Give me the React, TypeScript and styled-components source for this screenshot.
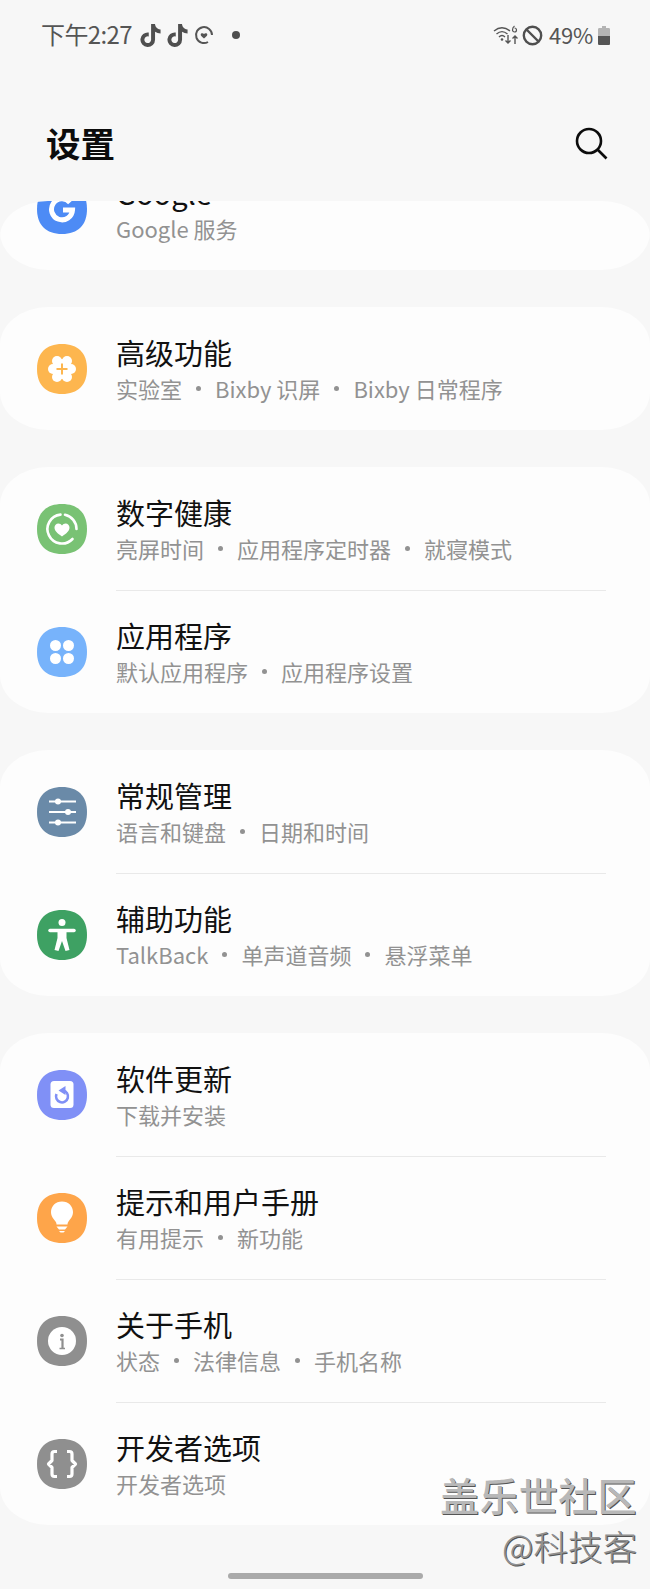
import React from "react";
import styled, { createGlobalStyle } from "styled-components";
import { FaTiktok } from "react-icons/fa6";

const GlobalStyle = createGlobalStyle`
  html, body {
    margin: 0;
    padding: 0;
    background: #f7f7f7;
  }
  * {
    box-sizing: border-box;
  }
`;

const FONT = `"Noto Sans CJK SC", "Noto Sans", sans-serif`;

const Page = styled.div`
  position: relative;
  width: 650px;
  height: 1589px;
  overflow: hidden;
  display: flex;
  flex-direction: column;
  background: #f7f7f7;
  font-family: ${FONT};
`;

const StatusBar = styled.div`
  height: 70px;
  padding: 0 40px 0 41px;
  display: flex;
  align-items: center;
  justify-content: space-between;
  color: #555;
  font-size: 24px;
  font-weight: 400;
`;

const StatusGroup = styled.div`
  display: flex;
  align-items: center;
`;

const Clock = styled.span`
  letter-spacing: -0.6px;
  margin: 0 8px 3px 0;
`;

const TikTok = styled(FaTiktok)`
  width: 21px;
  height: 23px;
  margin-right: 6px;
  color: #4f4f4f;
`;

const Percent = styled.span`
  font-size: 22px;
  margin: 0 5px 3px 6px;
  letter-spacing: -0.2px;
`;

const Header = styled.div`
  height: 131px;
  padding: 17px 41px 0 46px;
  display: flex;
  align-items: center;
  justify-content: space-between;
`;

const Title = styled.h1`
  margin: 0 0 5px;
  font-size: 34.5px;
  font-weight: 700;
  color: #0c0c0c;
`;

const List = styled.div`
  flex: 1;
  min-height: 0;
  overflow: hidden;
  border-radius: 48px 48px 0 0 / 36px 36px 0 0;
  display: flex;
  flex-direction: column;
  gap: 37px;
`;

const Card = styled.section<{ $clipped?: boolean }>`
  flex: none;
  background: #fdfdfd;
  border-radius: 48px / 38px;
  margin-top: ${({ $clipped }) => ($clipped ? "-54px" : "0")};
`;

const Row = styled.div`
  height: 123px;
  padding: 0 44px 0 37px;
  display: flex;
  align-items: center;
  gap: 29px;
`;

const Body = styled.div<{ $divided: boolean }>`
  flex: 1;
  height: 100%;
  padding-top: 23px;
  border-top: ${({ $divided }) => ($divided ? "1.5px solid #e9e9e9" : "1.5px solid transparent")};
`;

const RowTitle = styled.div`
  font-size: 29px;
  line-height: 43px;
  color: #111;
`;

const RowSub = styled.div`
  display: flex;
  align-items: center;
  font-size: 22px;
  line-height: 29px;
  color: #929292;
`;

const Dot = styled.i`
  width: 5px;
  height: 5px;
  margin: 0 14px;
  border-radius: 50%;
  background: #929292;
`;

const Glyph = styled.svg`
  flex: none;
  display: block;
`;

const Watermark = styled.div`
  position: absolute;
  right: 13px;
  bottom: 24px;
  display: flex;
  flex-direction: column;
  align-items: flex-end;
  font-family: ${FONT};
`;

const MarkMain = styled.div`
  font-size: 39px;
  line-height: 48px;
  font-weight: 500;
  letter-spacing: 0.4px;
  color: #b8b8b8;
  text-shadow: 1px 1px 0 #555, -1px 0 0 #fff;
`;

const MarkSub = styled.div`
  margin-top: 7px;
  font-size: 34.5px;
  line-height: 40px;
  font-weight: 300;
  color: #909090;
  text-shadow: 1px 1px 0 #555;
`;

const HomeBar = styled.div`
  position: absolute;
  left: 228px;
  bottom: 10px;
  width: 195px;
  height: 6px;
  border-radius: 3px;
  background: #aaa;
`;

const SQUIRCLE = "M25 0C41 0 50 9 50 25C50 41 41 50 25 50C9 50 0 41 0 25C0 9 9 0 25 0Z";

const Tile = ({ color, children }: { color: string; children: React.ReactNode }) => (
  <Glyph width="50" height="50" viewBox="0 0 50 50">
    <path d={SQUIRCLE} fill={color} />
    {children}
  </Glyph>
);

const icons: Record<string, React.ReactNode> = {
  google: (
    <Tile color="#4d8bf5">
      <path d="M33 18.5A10.500 10.500 0 1 0 35.500 26H26" fill="none" stroke="#fff" strokeWidth="5" />
    </Tile>
  ),
  advanced: (
    <Tile color="#fdb64f">
      <g fill="#fff">
        <circle cx="25" cy="25" r="10" />
        <circle cx="34" cy="25" r="5" />
        <circle cx="16" cy="25" r="5" />
        <circle cx="30" cy="17" r="5" />
        <circle cx="20" cy="17" r="5" />
        <circle cx="30" cy="33" r="5" />
        <circle cx="20" cy="33" r="5" />
      </g>
      <path d="M25 19.500v11M19.500 25h11" stroke="#fdb64f" strokeWidth="2" />
    </Tile>
  ),
  wellbeing: (
    <Tile color="#79c274">
      <g fill="none" stroke="#fff" strokeLinecap="round" strokeWidth="2.600">
        <path d="M39.500 25A14.500 14.500 0 0 0 28 10.800" />
        <path d="M23.500 10.600A14.500 14.500 0 1 0 35.500 35" />
      </g>
      <path
        d="M25 32.500c-4.600-3.200-7.500-5.600-7.500-9 0-2.300 1.700-4 3.900-4 1.500 0 2.800.8 3.600 2.100.8-1.300 2.100-2.100 3.600-2.100 2.200 0 3.900 1.700 3.900 4 0 3.400-2.900 5.800-7.500 9z"
        fill="#fff"
      />
    </Tile>
  ),
  apps: (
    <Tile color="#77b3fb">
      <circle cx="18.500" cy="18.500" r="5.500" fill="#fff" />
      <circle cx="31.500" cy="18.500" r="5.500" fill="#fff" />
      <circle cx="18.500" cy="31.500" r="5.500" fill="#fff" />
      <circle cx="31.500" cy="31.500" r="5.500" fill="#fff" />
    </Tile>
  ),
  general: (
    <Tile color="#6a8aa8">
      <path d="M12 14.500h27M12 25h27M12 35.500h27" stroke="#fff" strokeWidth="1.800" />
      <circle cx="21" cy="14.500" r="3" fill="#fff" />
      <circle cx="31" cy="25" r="3" fill="#fff" />
      <circle cx="21" cy="35.500" r="3" fill="#fff" />
    </Tile>
  ),
  access: (
    <Tile color="#3ea163">
      <circle cx="25" cy="12.500" r="3.500" fill="#fff" />
      <path d="M13 20.500h24" stroke="#fff" strokeWidth="3.500" strokeLinecap="round" />
      <path d="M20.500 20H29.500V28L32.500 40L28.500 41L25 31L21.500 41L17.500 40L20.500 28Z" fill="#fff" />
    </Tile>
  ),
  update: (
    <Tile color="#8090f6">
      <rect x="13.500" y="11" width="23" height="27" rx="3.500" fill="#fff" />
      <path d="M19.500 24A6 6 0 1 0 26 20.500" fill="none" stroke="#8090f6" strokeWidth="2.600" />
      <path d="M21.500 20.500L28.500 16V25Z" fill="#8090f6" />
    </Tile>
  ),
  tips: (
    <Tile color="#fea54a">
      <path
        d="M25 8.500c6.500 0 11 4.800 11 10.500 0 4.500-2.600 7-4.500 9.500-.8 1-1 2-1 3h-11c0-1-.2-2-1-3-1.900-2.500-4.500-5-4.500-9.500 0-5.700 4.500-10.500 11-10.500z"
        fill="#fff"
      />
      <path d="M19.500 33.500h11l-2.500 3h-6zM22 38h6l-1.500 1.500h-3z" fill="#fff" />
    </Tile>
  ),
  about: (
    <Tile color="#8f8f8f">
      <circle cx="25" cy="25" r="14" fill="#fff" />
      <circle cx="25" cy="19.500" r="1.800" fill="#8f8f8f" />
      <path d="M23 23.500h2.500V32" fill="none" stroke="#8f8f8f" strokeWidth="2.200" />
      <path d="M22.500 32.500h5.500" stroke="#8f8f8f" strokeWidth="1.500" />
    </Tile>
  ),
  dev: (
    <Tile color="#8f8f8f">
      <path
        d="M20 12.500h-2.500c-1.800 0-2.500 1-2.500 2.500v6.500l-3.500 3.500 3.500 3.500V35c0 1.500.7 2.500 2.500 2.500H20M30 12.500h2.500c1.800 0 2.500 1 2.500 2.500v6.500l3.500 3.500-3.500 3.500V35c0 1.500-.7 2.500-2.500 2.500H30"
        fill="none"
        stroke="#fff"
        strokeWidth="3.200"
        strokeLinejoin="round"
      />
    </Tile>
  ),
};

type Item = { icon: string; title: string; subs: string[] };

const groups: { clipped?: boolean; items: Item[] }[] = [
  { clipped: true, items: [{ icon: "google", title: "Google", subs: ["Google 服务"] }] },
  { items: [{ icon: "advanced", title: "高级功能", subs: ["实验室", "Bixby 识屏", "Bixby 日常程序"] }] },
  {
    items: [
      { icon: "wellbeing", title: "数字健康", subs: ["亮屏时间", "应用程序定时器", "就寝模式"] },
      { icon: "apps", title: "应用程序", subs: ["默认应用程序", "应用程序设置"] },
    ],
  },
  {
    items: [
      { icon: "general", title: "常规管理", subs: ["语言和键盘", "日期和时间"] },
      { icon: "access", title: "辅助功能", subs: ["TalkBack", "单声道音频", "悬浮菜单"] },
    ],
  },
  {
    items: [
      { icon: "update", title: "软件更新", subs: ["下载并安装"] },
      { icon: "tips", title: "提示和用户手册", subs: ["有用提示", "新功能"] },
      { icon: "about", title: "关于手机", subs: ["状态", "法律信息", "手机名称"] },
      { icon: "dev", title: "开发者选项", subs: ["开发者选项"] },
    ],
  },
];

const HealthStatus = () => (
  <Glyph width="20" height="20" viewBox="0 0 20 20">
    <path d="M18 10a8 8 0 1 0-4 7" fill="none" stroke="#555" strokeWidth="2" />
    <path d="M10 13.500c-2.200-1.600-3.300-2.600-3.300-3.900C6.700 8.200 9 7.800 10 9.100c1-1.300 3.300-.9 3.300.5 0 1.300-1.100 2.300-3.300 3.900z" fill="#555" />
  </Glyph>
);

const NotifyDot = () => (
  <Glyph width="8" height="8" viewBox="0 0 8 8" style={{ marginLeft: 18 }}>
    <circle cx="4" cy="4" r="4" fill="#4f4f4f" />
  </Glyph>
);

const WifiStatus = () => (
  <Glyph width="26" height="20" viewBox="0 0 26 20">
    <g fill="none" stroke="#555" strokeWidth="1.400">
      <path d="M1 6c5-4 11-4 16 0" />
      <path d="M3.500 9c3.500-3 7.500-3 11 0" />
      <path d="M6 12c2-2 4-2 6 0" />
    </g>
    <circle cx="9" cy="14.500" r="1.300" fill="#555" />
    <path d="M15 10v8m-2.500-2.500L15 18l2.500-2.500M22 19v-8m-2.500 2.500L22 11l2.500 2.500" fill="none" stroke="#555" strokeWidth="1.400" />
    <path d="M21.500 1c-1.500 1-2 2.500-2 4a2 2 0 1 0 2-2" fill="none" stroke="#555" strokeWidth="1.200" />
  </Glyph>
);

const BlockStatus = () => (
  <Glyph width="21" height="21" viewBox="0 0 21 21" style={{ marginLeft: 3 }}>
    <circle cx="10.500" cy="10.500" r="8.700" fill="none" stroke="#4f4f4f" strokeWidth="2.400" />
    <path d="M4.500 4.500l12 12" stroke="#4f4f4f" strokeWidth="2.400" />
  </Glyph>
);

const BatteryStatus = () => (
  <Glyph width="12" height="19" viewBox="0 0 12 19">
    <path d="M4 0h4v2h2.500c1 0 1.500.5 1.500 1.500V10H0V3.500C0 2.500.5 2 1.500 2H4z" fill="#b4b4b4" />
    <path d="M0 10h12v7.500c0 1-.5 1.500-1.500 1.500h-9C.5 19 0 18.500 0 17.500z" fill="#555" />
  </Glyph>
);

const SearchIcon = () => (
  <Glyph width="34" height="34" viewBox="0 0 34 34">
    <circle cx="14" cy="14" r="12" fill="none" stroke="#0c0c0c" strokeWidth="2.600" />
    <path d="M22.500 22.500l9 9" stroke="#0c0c0c" strokeWidth="2.600" />
  </Glyph>
);

const App = () => {
  return (
    <Page>
      <GlobalStyle />
      <StatusBar>
        <StatusGroup>
          <Clock>下午2:27</Clock>
          <TikTok />
          <TikTok />
          <HealthStatus />
          <NotifyDot />
        </StatusGroup>
        <StatusGroup>
          <WifiStatus />
          <BlockStatus />
          <Percent>49%</Percent>
          <BatteryStatus />
        </StatusGroup>
      </StatusBar>
      <Header>
        <Title>设置</Title>
        <SearchIcon />
      </Header>
      <List>
        {groups.map((group, g) => (
          <Card key={g} $clipped={group.clipped}>
            {group.items.map((item, i) => (
              <Row key={item.title}>
                {icons[item.icon]}
                <Body $divided={i > 0}>
                  <RowTitle>{item.title}</RowTitle>
                  <RowSub>
                    {item.subs.map((sub, s) => (
                      <React.Fragment key={sub}>
                        {s > 0 && <Dot />}
                        <span>{sub}</span>
                      </React.Fragment>
                    ))}
                  </RowSub>
                </Body>
              </Row>
            ))}
          </Card>
        ))}
      </List>
      <Watermark>
        <MarkMain>盖乐世社区</MarkMain>
        <MarkSub>@科技客</MarkSub>
      </Watermark>
      <HomeBar />
    </Page>
  );
};

export default App;
